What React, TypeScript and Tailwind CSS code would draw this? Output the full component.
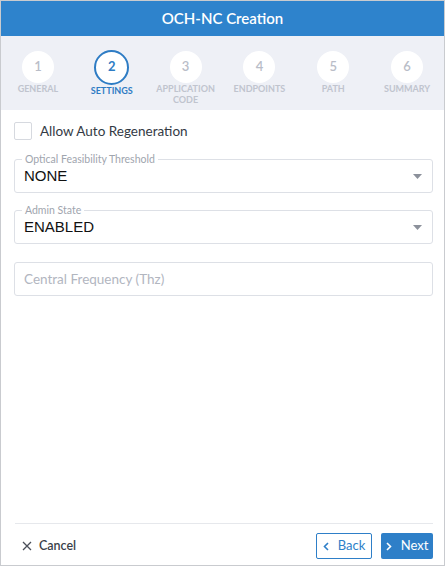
import React from "react";

const steps = [
  { n: 1, label: ["GENERAL"] },
  { n: 2, label: ["SETTINGS"] },
  { n: 3, label: ["APPLICATION", "CODE"] },
  { n: 4, label: ["ENDPOINTS"] },
  { n: 5, label: ["PATH"] },
  { n: 6, label: ["SUMMARY"] },
];

function Caret() {
  return (
    <svg width="9" height="5" viewBox="0 0 9 5" className="shrink-0">
      <path d="M0 0 L9 0 L4.5 5 Z" fill="#8c919b" />
    </svg>
  );
}

function SelectField({ label, value }: { label: string; value: string }) {
  return (
    <fieldset className="border border-[#dde0e6] rounded-[3px] px-[7px] pb-[5px]">
      <legend className="px-[3px] text-[10.5px] leading-[12px] text-[#a0a5ae]">{label}</legend>
      <div className="h-[22px] flex items-center justify-between pl-[2px] pr-[3px]">
        <span className="text-[15px] text-[#111] font-['Liberation_Sans',Arial,sans-serif]">{value}</span>
        <Caret />
      </div>
    </fieldset>
  );
}

export default function App() {
  return (
    <div className="w-[445px] h-[566px] border border-[#c9cbcf] bg-white flex flex-col font-['Lato','Open_Sans',sans-serif]">
      <div className="h-[35px] bg-[#2e83cc] flex items-center justify-center text-white text-[15px] font-semibold shrink-0">
        OCH-NC Creation
      </div>
      <div className="h-[74px] bg-[#eef0f6] grid grid-cols-6 pt-[14px] shrink-0">
        {steps.map((s) => {
          const active = s.n === 2;
          return (
            <div key={s.n} className="flex flex-col items-center">
              <div className="h-[34px] flex items-center justify-center">
                {active ? (
                  <div className="w-[35px] h-[35px] rounded-full bg-white border-2 border-[#2e7cc4] flex items-center justify-center text-[13px] font-bold text-[#2e7cc4]">
                    {s.n}
                  </div>
                ) : (
                  <div className="w-[32px] h-[32px] rounded-full bg-white flex items-center justify-center text-[13px] font-semibold text-[#b9bdc8]">
                    {s.n}
                  </div>
                )}
              </div>
              <div
                className={
                  "text-center text-[9px] leading-[11px] font-bold " +
                  (active ? "mt-[1px] text-[#2e7cc4]" : "-mt-[1px] text-[#c0c4ce]")
                }
              >
                {s.label.map((l) => (
                  <div key={l}>{l}</div>
                ))}
              </div>
            </div>
          );
        })}
      </div>
      <div className="flex-1 flex flex-col pl-[13px] pr-[11px] pt-[12px]">
        <div className="flex items-center h-[18px]">
          <div className="w-[18px] h-[18px] border border-[#d6d9df] rounded-[2px] bg-white" />
          <span className="ml-[8px] text-[13.5px] text-[#333a44]">Allow Auto Regeneration</span>
        </div>
        <div className="mt-[13px]">
          <SelectField label="Optical Feasibility Threshold" value="NONE" />
        </div>
        <div className="mt-[11px]">
          <SelectField label="Admin State" value="ENABLED" />
        </div>
        <div className="mt-[18px] h-[34px] border border-[#dde0e6] rounded-[3px] flex items-center pl-[9px] text-[13.5px] text-[#b2b6bf]">
          Central Frequency (Thz)
        </div>
      </div>
      <div className="ml-[14px] mr-[11px] border-t border-[#e6e8ec] pt-[9px] pb-[6px] flex items-center justify-between shrink-0">
        <div className="flex items-center pl-[7px] text-[12.5px] font-semibold text-[#3a3f4a]">
          <svg width="10" height="10" viewBox="0 0 10 10">
            <path d="M1 1 L9 9 M9 1 L1 9" stroke="#4a4f59" strokeWidth="1.3" />
          </svg>
          <span className="ml-[7px]">Cancel</span>
        </div>
        <div className="flex items-center gap-[9px]">
          <div className="w-[56px] h-[26px] border border-[#2e7fc8] rounded-[2px] flex items-center justify-center text-[13px] text-[#2e7fc8] bg-white">
            <svg width="6" height="9" viewBox="0 0 6 9">
              <path d="M5 1 L1.5 4.5 L5 8" stroke="#2e7fc8" strokeWidth="1.6" fill="none" />
            </svg>
            <span className="ml-[9px]">Back</span>
          </div>
          <div className="w-[52px] h-[26px] rounded-[2px] bg-[#2e7fc8] flex items-center justify-center text-[13px] text-white">
            <svg width="6" height="9" viewBox="0 0 6 9">
              <path d="M1 1 L4.5 4.5 L1 8" stroke="#ffffff" strokeWidth="1.6" fill="none" />
            </svg>
            <span className="ml-[9px]">Next</span>
          </div>
        </div>
      </div>
    </div>
  );
}
